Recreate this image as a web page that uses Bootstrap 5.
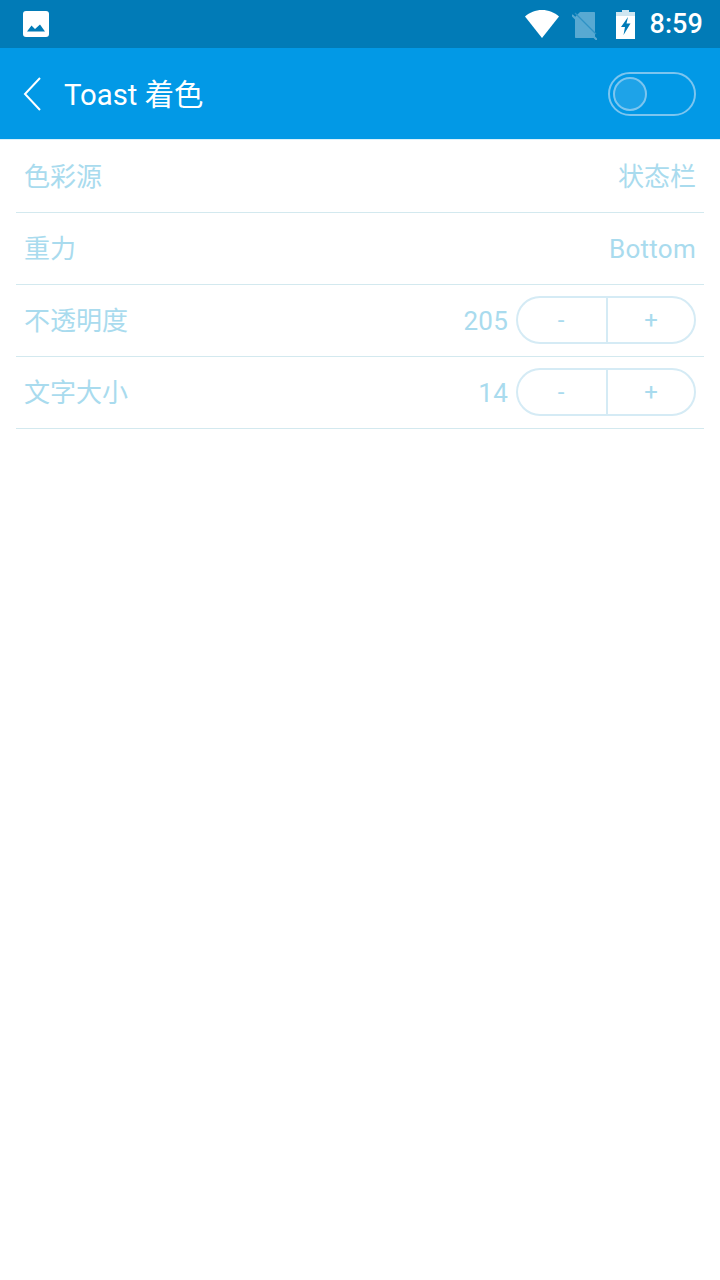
<!DOCTYPE html>
<html lang="zh">

<head>
  <meta charset="UTF-8">
  <meta name="viewport" content="width=device-width, initial-scale=1.0">
  <title>Toast 着色</title>
  <link href="https://cdn.jsdelivr.net/npm/bootstrap@5.3.0/dist/css/bootstrap.min.css" rel="stylesheet">
  <style>
    body {
      font-family: Roboto, "Noto Sans CJK SC", sans-serif;
      background: #fff;
    }

    .status-strip {
      height: 48px;
      background: #017bb7;
      padding: 0 17px 0 23px;
      color: #fff;
    }

    .sim-icon {
      margin: 4px 0 0 13px;
    }

    .battery-icon {
      margin-left: 19px;
    }

    .status-time {
      font-size: 27px;
      font-weight: 500;
      line-height: 1;
      letter-spacing: .1px;
      margin-left: 14px;
    }

    .title-strip {
      height: 92px;
      background: #0299e6;
      border-bottom: 1px solid #d8f1fb;
      padding: 4px 24px 0 22px;
      color: #fff;
    }

    .back-icon {
      margin-top: -4px;
    }

    .title-text {
      font-size: 29.3px;
      line-height: 1;
      margin-left: 22px;
    }

    .toggle-track {
      width: 88px;
      height: 44px;
      margin-top: -4px;
      border: 2px solid #7cc5ef;
      border-radius: 22px;
      padding: 0 3px;
    }

    .toggle-thumb {
      width: 34px;
      height: 34px;
      border: 2px solid #7cc5ef;
      border-radius: 50%;
      background: #1ea3e8;
    }

    .setting-list {
      padding: 0 16px;
    }

    .setting-row {
      height: 72px;
      padding: 2px 8px 0;
      border-bottom: 1px solid #d3e9ef;
      font-size: 26px;
      color: #a9dbee;
    }

    .setting-row:first-child {
      height: 73px;
    }

    .latin-value {
      letter-spacing: .25px;
    }

    .btn-group.stepper {
      width: 180px;
      height: 48px;
      margin: 0 0 4px 8px;
    }

    .btn-group.stepper > .btn {
      flex: 1 1 50%;
      background: #fff;
      border: 2px solid #d5ebf5;
      border-radius: 24px;
      color: #a9dbee;
      font-size: 24px;
      line-height: 1;
      padding: 0;
    }

    .btn-group.stepper > .btn:first-child {
      border-right-width: 0;
      padding-right: 2px;
      border-top-right-radius: 0;
      border-bottom-right-radius: 0;
    }

    .btn-group.stepper > .btn:last-child {
      margin-left: 0;
      border-top-left-radius: 0;
      border-bottom-left-radius: 0;
    }
  </style>
</head>

<body>
  <!-- Status bar -->
  <div class="status-strip d-flex align-items-center">
    <svg width="26" height="26" viewBox="0 0 26 26">
      <rect width="26" height="26" rx="3" fill="#fff" />
      <path d="M4 20.500 8.500 14.500 12 18 17 13.500 22 20.500Z" fill="#017bb7" />
    </svg>
    <div class="ms-auto d-flex align-items-center">
      <svg width="34" height="28" viewBox="0 0 34 28">
        <path d="M0 6.500C4.500 2.500 10.500 0 17 0S29.500 2.500 34 6.500L17 28Z" fill="#fff" />
      </svg>
      <svg width="25" height="28" viewBox="0 0 25 28" class="sim-icon">
        <path d="M8 0H22C22.600 0 23 .4 23 1V25C23 25.600 22.600 26 22 26H4C3.400 26 3 25.600 3 25V5Z" fill="#58a9d2" />
        <path d="M3 1 24 22" stroke="#2f92c5" stroke-width="1.200" />
        <path d="M0 3 25 28" stroke="#58a9d2" stroke-width="2" />
      </svg>
      <svg width="19" height="29" viewBox="0 0 19 29" class="battery-icon">
        <path d="M6 0H13V2H19V7H0V2H6Z" fill="#cfe6f1" />
        <path d="M0 6H19V29H0Z" fill="#fff" />
        <path d="M12 7 5 17H9L7.500 25 14.500 13.500H10.500Z" fill="#017bb7" />
      </svg>
      <span class="status-time">8:59</span>
    </div>
  </div>

  <!-- Title bar -->
  <div class="title-strip d-flex align-items-center">
    <svg width="20" height="34" viewBox="0 0 20 34" class="back-icon">
      <path d="M18 1 3 17 18 33" fill="none" stroke="#fff" stroke-width="2" />
    </svg>
    <span class="title-text">Toast 着色</span>
    <div class="toggle-track ms-auto d-flex align-items-center">
      <div class="toggle-thumb"></div>
    </div>
  </div>

  <!-- Settings -->
  <div class="setting-list">
    <div class="setting-row d-flex align-items-center justify-content-between">
      <span>色彩源</span>
      <span>状态栏</span>
    </div>
    <div class="setting-row d-flex align-items-center justify-content-between">
      <span>重力</span>
      <span class="latin-value">Bottom</span>
    </div>
    <div class="setting-row d-flex align-items-center">
      <span>不透明度</span>
      <span class="ms-auto latin-value">205</span>
      <div class="btn-group stepper">
        <button type="button" class="btn">-</button>
        <button type="button" class="btn">+</button>
      </div>
    </div>
    <div class="setting-row d-flex align-items-center">
      <span>文字大小</span>
      <span class="ms-auto latin-value">14</span>
      <div class="btn-group stepper">
        <button type="button" class="btn">-</button>
        <button type="button" class="btn">+</button>
      </div>
    </div>
  </div>

  <script src="https://cdn.jsdelivr.net/npm/bootstrap@5.3.0/dist/js/bootstrap.bundle.min.js"></script>
</body>

</html>
